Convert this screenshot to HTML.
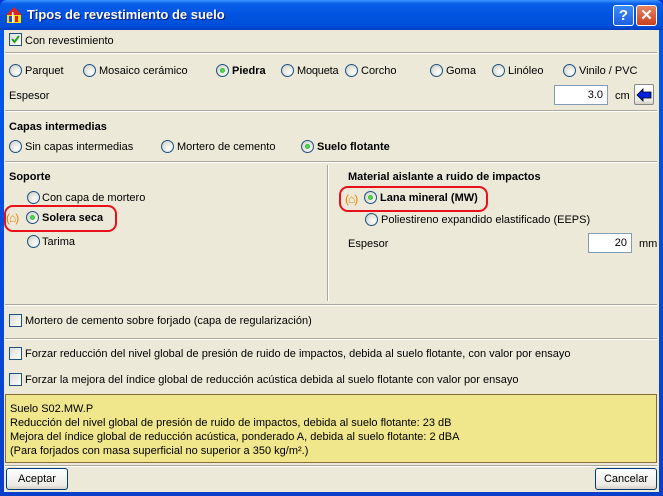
<!DOCTYPE html>
<html><head><meta charset="utf-8"><style>
*{margin:0;padding:0;box-sizing:border-box}
body{width:663px;height:496px;overflow:hidden;background:#0831D9;font-family:"Liberation Sans",sans-serif;font-size:11px;color:#000;position:relative}
.win{position:absolute;left:0;top:0;width:663px;height:496px;background:linear-gradient(#0058EE,#0A3FC9);border-radius:7px 7px 0 0}
.title{position:absolute;left:0;top:0;width:663px;height:30px;border-radius:7px 7px 0 0;background:linear-gradient(#3D95FF 0%,#0A5FE8 12%,#0053E0 50%,#0050DA 85%,#003DC0 100%)}
.title span{position:absolute;left:27px;top:7px;color:#fff;font-weight:bold;font-size:13px;text-shadow:1px 1px #0A1C7A}
.tb{position:absolute;top:5px;width:21px;height:21px;border:1px solid #fff;border-radius:3px;color:#fff;font-weight:bold;font-size:15px;text-align:center;line-height:19px}
.body{position:absolute;left:4px;top:30px;width:655px;height:462px;background:#ECE9D8}
.a{position:absolute;white-space:nowrap;margin-top:1px}
.b{font-weight:bold}
.r{position:absolute;width:13px;height:13px;border-radius:50%;border:1px solid #1C5180;background:radial-gradient(circle at 65% 65%,#fff 0%,#e8e8e2 45%,#c8c8c0 100%)}
.r.c::after{content:"";position:absolute;left:3px;top:3px;width:5px;height:5px;border-radius:50%;background:radial-gradient(#5DE65D,#21A121)}
.cb{position:absolute;width:13px;height:13px;border:1px solid #1C5180;background:linear-gradient(135deg,#dcdcd6,#fff)}
.sep{position:absolute;height:2px;border-top:1px solid #ACA899;border-bottom:1px solid #fff}
.inp{position:absolute;background:#fff;border:1px solid #7F9DB9;text-align:right;padding-right:4px;line-height:18px}
.btn{position:absolute;height:22px;border:1px solid #003C74;border-radius:3px;background:linear-gradient(#fff,#ECEBE6 80%,#D6D0C5);text-align:center;line-height:20px}
.red{position:absolute;border:2px solid #E8101A;border-radius:9px}
.hi{position:absolute;color:#F08000;font-size:12px;letter-spacing:-1px}
</style></head><body>
<div class="win"></div>
<div class="title">
<svg style="position:absolute;left:5px;top:6px" width="18" height="18"><polygon points="9,1 1,9 17,9" fill="#D22"/><rect x="2" y="9" width="14" height="8" fill="#F5E000"/><rect x="4" y="10" width="3" height="6" fill="#2050D0"/><rect x="10" y="10" width="3" height="6" fill="#D22"/><rect x="7" y="6" width="1.5" height="11" fill="#fff"/></svg>
<span>Tipos de revestimiento de suelo</span>
<div class="tb" style="left:613px;background:linear-gradient(#3C8CF8,#1E5FE0)">?</div>
<div class="tb" style="left:636px;background:linear-gradient(#E88462,#C9401E)">✕</div>
</div>
<div class="body"></div>

<div class="cb" style="left:9px;top:33px"><svg width="11" height="11" style="position:absolute;left:0;top:0"><path d="M2 5 L4.5 8 L9 2" stroke="#21A121" stroke-width="2" fill="none"/></svg></div>
<div class="a" style="left:25px;top:34px">Con revestimiento</div>
<div class="sep" style="left:5px;top:52px;width:652px"></div>

<div class="r" style="left:9px;top:64px"></div><div class="a" style="left:25px;top:64px">Parquet</div>
<div class="r" style="left:83px;top:64px"></div><div class="a" style="left:99px;top:64px">Mosaico cerámico</div>
<div class="r c" style="left:216px;top:64px"></div><div class="a b" style="left:232px;top:64px">Piedra</div>
<div class="r" style="left:281px;top:64px"></div><div class="a" style="left:297px;top:64px;letter-spacing:-0.2px">Moqueta</div>
<div class="r" style="left:345px;top:64px"></div><div class="a" style="left:361px;top:64px">Corcho</div>
<div class="r" style="left:430px;top:64px"></div><div class="a" style="left:446px;top:64px">Goma</div>
<div class="r" style="left:492px;top:64px"></div><div class="a" style="left:508px;top:64px">Linóleo</div>
<div class="r" style="left:563px;top:64px"></div><div class="a" style="left:579px;top:64px">Vinilo / PVC</div>

<div class="a" style="left:9px;top:89px">Espesor</div>
<div class="inp" style="left:554px;top:85px;width:54px;height:20px">3.0</div>
<div class="a" style="left:615px;top:89px">cm</div>
<div class="btn" style="left:634px;top:84px;width:20px;height:21px;border-color:#888;border-radius:2px"><svg width="16" height="14" style="position:absolute;left:1px;top:3px"><path d="M1 7 L7 1 L7 4 L15 4 L15 10 L7 10 L7 13 Z" fill="#0020E0" stroke="#000" stroke-width="0.8"/></svg></div>
<div class="sep" style="left:5px;top:110px;width:652px"></div>

<div class="a b" style="left:9px;top:120px">Capas intermedias</div>
<div class="r" style="left:9px;top:140px"></div><div class="a" style="left:25px;top:140px">Sin capas intermedias</div>
<div class="r" style="left:161px;top:140px"></div><div class="a" style="left:177px;top:140px">Mortero de cemento</div>
<div class="r c" style="left:301px;top:140px"></div><div class="a b" style="left:317px;top:140px">Suelo flotante</div>
<div class="sep" style="left:5px;top:161px;width:652px"></div>
<div style="position:absolute;left:327px;top:165px;width:2px;height:136px;border-left:1px solid #ACA899;border-right:1px solid #fff"></div>

<div class="a b" style="left:9px;top:170px">Soporte</div>
<div class="r" style="left:27px;top:191px"></div><div class="a" style="left:42px;top:191px">Con capa de mortero</div>
<div class="red" style="left:4px;top:205px;width:113px;height:27px"></div>
<div class="hi" style="left:6px;top:211px">(⌂)</div>
<div class="r c" style="left:26px;top:211px"></div><div class="a b" style="left:42px;top:211px">Solera seca</div>
<div class="r" style="left:27px;top:235px"></div><div class="a" style="left:42px;top:235px">Tarima</div>

<div class="a b" style="left:348px;top:170px">Material aislante a ruido de impactos</div>
<div class="red" style="left:339px;top:186px;width:149px;height:26px"></div>
<div class="hi" style="left:345px;top:192px">(⌂)</div>
<div class="r c" style="left:364px;top:191px"></div><div class="a b" style="left:380px;top:191px">Lana mineral (MW)</div>
<div class="r" style="left:365px;top:213px"></div><div class="a" style="left:381px;top:213px">Poliestireno expandido elastificado (EEPS)</div>
<div class="a" style="left:348px;top:237px">Espesor</div>
<div class="inp" style="left:588px;top:233px;width:44px;height:20px">20</div>
<div class="a" style="left:639px;top:237px">mm</div>

<div class="sep" style="left:5px;top:304px;width:652px"></div>
<div class="cb" style="left:9px;top:314px"></div><div class="a" style="left:25px;top:314px">Mortero de cemento sobre forjado (capa de regularización)</div>
<div class="sep" style="left:5px;top:338px;width:652px"></div>
<div class="cb" style="left:9px;top:347px"></div><div class="a" style="left:25px;top:347px">Forzar reducción del nivel global de presión de ruido de impactos, debida al suelo flotante, con valor por ensayo</div>
<div class="cb" style="left:9px;top:373px"></div><div class="a" style="left:25px;top:373px">Forzar la mejora del índice global de reducción acústica debida al suelo flotante con valor por ensayo</div>

<div style="position:absolute;left:5px;top:394px;width:652px;height:69px;background:#F0E68C;border:1px solid #8B6B3B"></div>
<div class="a" style="left:10px;top:401px;line-height:14px">Suelo S02.MW.P<br>Reducción del nivel global de presión de ruido de impactos, debida al suelo flotante: 23 dB<br>Mejora del índice global de reducción acústica, ponderado A, debida al suelo flotante: 2 dBA<br>(Para forjados con masa superficial no superior a 350 kg/m².)</div>
<div class="sep" style="left:5px;top:465px;width:652px"></div>

<div class="btn" style="left:6px;top:468px;width:62px">Aceptar</div>
<div class="btn" style="left:595px;top:468px;width:62px">Cancelar</div>
</body></html>
